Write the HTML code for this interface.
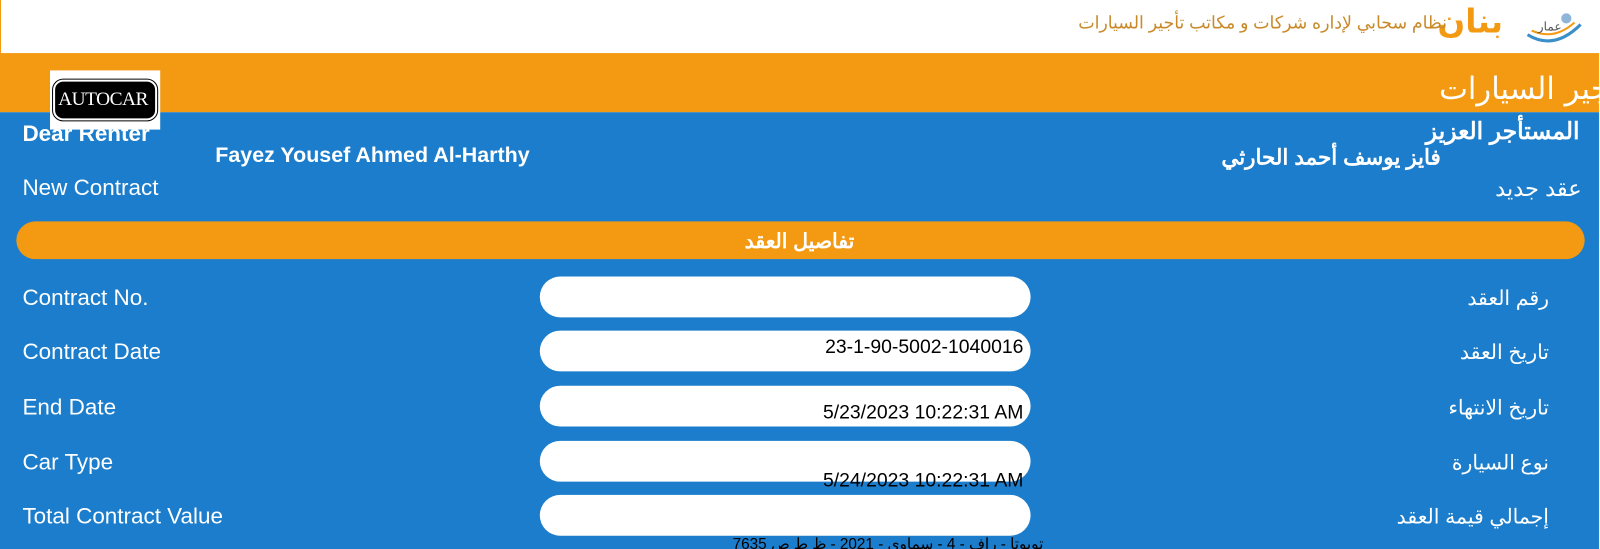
<!DOCTYPE html>
<html><head><meta charset="utf-8"><style>
*{margin:0;padding:0;box-sizing:border-box}
body{width:1600px;height:549px;overflow:hidden;background:#fff;font-family:"Liberation Sans","Noto Sans CJK SC",sans-serif;position:relative}
#wrap{position:absolute;left:0;top:0;width:1568px;height:538px;transform:scale(1.0204);transform-origin:0 0;overflow:hidden}
.a{position:absolute;white-space:nowrap}
.hdr{left:0;top:0;width:1567px;height:52px;background:#fff;border-left:1px solid #f39a12}
.or{left:0;top:52px;width:1567px;height:58px;background:#f39a12;overflow:hidden}
.bl{left:0;top:110px;width:1567px;height:439px;background:#1b7dcb}
.w{color:#fff}
.lbl{color:#fff;font-size:22px;left:22px}
.rl{color:#fff;font-size:20px;right:50px;direction:rtl}
.inp{left:529px;width:481px;height:40px;background:#fff;border-radius:20px}
.val{color:#000;font-size:19px;right:565px}
</style></head><body><div id="wrap">
<div class="a hdr"></div>
<svg class="a" style="left:1493px;top:10px" width="60" height="34" viewBox="0 0 60 34"><path d="M4 24 Q30 40 56 14" stroke="#3a8fc8" stroke-width="3" fill="none"/><path d="M8 20 Q30 30 50 12" stroke="#f39a12" stroke-width="2" fill="none"/><circle cx="42" cy="8" r="5" fill="#8fb6d8"/><text x="14" y="20" font-size="12" fill="#555" font-family="Noto Sans CJK SC">عمار</text></svg>
<div class="a" style="right:95px;top:2px;color:#f39a12;font-size:32px;font-weight:bold;font-family:'DejaVu Sans',sans-serif">بنان</div>
<div class="a" style="right:150px;top:13px;color:#c98a2a;font-size:17px;direction:rtl">نظام سحابي لإداره شركات و مكاتب تأجير السيارات</div>
<div class="a or"><div class="a w" style="right:-28px;top:18px;font-size:30px;direction:rtl;font-family:'DejaVu Sans',sans-serif">تأجير السيارات</div></div>
<div class="a bl"></div>
<div class="a" style="left:49px;top:69px;width:108px;height:58px;background:#fff"></div>
<div class="a" style="left:52px;top:78px;width:102px;height:40px;background:#000;border-radius:10px;border:2px solid #fff;outline:1px solid #000"></div>
<div class="a" style="left:57px;top:87px;color:#fff;font-family:'Liberation Serif',serif;font-size:19px;letter-spacing:-0.5px">AUTOCAR</div>
<div class="a w" style="left:22px;top:118px;font-size:22px;font-weight:bold">Dear Renter</div>
<div class="a w" style="left:211px;top:141px;font-size:21px;font-weight:bold">Fayez Yousef Ahmed Al-Harthy</div>
<div class="a w" style="left:22px;top:171px;font-size:22px">New Contract</div>
<div class="a w" style="right:20px;top:115px;font-size:23px;font-weight:bold;direction:rtl">المستأجر العزيز</div>
<div class="a w" style="right:156px;top:142px;font-size:21px;font-weight:bold;direction:rtl">فايز يوسف أحمد الحارثي</div>
<div class="a w" style="right:18px;top:172px;font-size:22px;direction:rtl">عقد جديد</div>
<div class="a" style="left:16px;top:217px;width:1537px;height:37px;background:#f39a12;border-radius:19px"></div>
<div class="a w" style="left:0;width:1567px;text-align:center;top:224px;font-size:20px;font-weight:bold">تفاصيل العقد</div>

<div class="a lbl" style="top:279px">Contract No.</div>
<div class="a lbl" style="top:332px">Contract Date</div>
<div class="a lbl" style="top:386px">End Date</div>
<div class="a lbl" style="top:440px">Car Type</div>
<div class="a lbl" style="top:493px">Total Contract Value</div>
<div class="a rl" style="top:280px">رقم العقد</div>
<div class="a rl" style="top:333px">تاريخ العقد</div>
<div class="a rl" style="top:387px">تاريخ الانتهاء</div>
<div class="a rl" style="top:441px">نوع السيارة</div>
<div class="a rl" style="top:494px">إجمالي قيمة العقد</div>

<div class="a inp" style="top:271px"></div>
<div class="a inp" style="top:324px"></div>
<div class="a inp" style="top:378px"></div>
<div class="a inp" style="top:432px"></div>
<div class="a inp" style="top:485px"></div>
<div class="a val" style="top:330px">23-1-90-5002-1040016</div>
<div class="a val" style="top:394px">5/23/2023 10:22:31 AM</div>
<div class="a val" style="top:461px">5/24/2023 10:22:31 AM</div>
<div class="a" style="left:718px;top:524px;font-size:15px;color:#000;direction:rtl">تويوتا - راف - 4 - سماوي - 2021 - ظ ط ص 7635</div>
</div></body></html>
